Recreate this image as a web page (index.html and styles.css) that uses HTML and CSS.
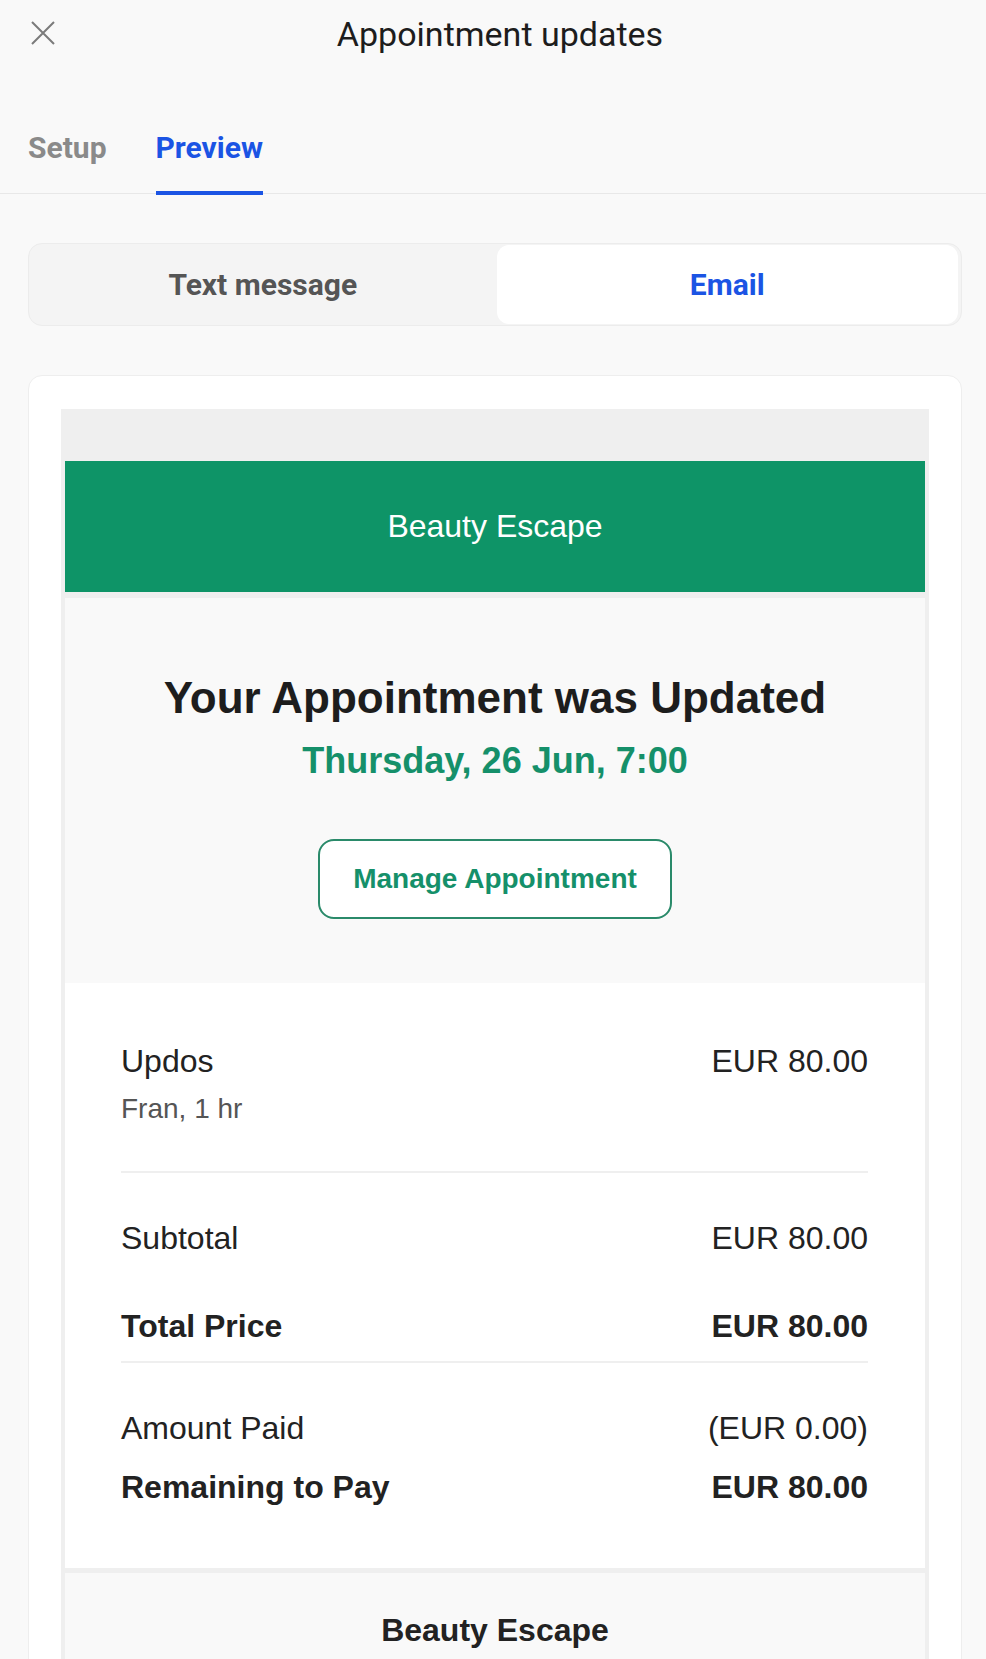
FILE: index.html
```html
<!DOCTYPE html>
<html lang="en">
<head>
  <meta charset="UTF-8" />
  <title>Appointment updates</title>
  <link rel="stylesheet" href="styles.css">
</head>
<body>

  <header class="topbar">
    <button class="close" aria-label="Close">
      <svg viewBox="0 0 24 24" width="24" height="24"><path d="M1 1L23 23M23 1L1 23" /></svg>
    </button>
    <h1 class="title">Appointment updates</h1>
    <span></span>
  </header>

  <nav class="tabs">
    <a class="tab">Setup</a>
    <a class="tab active">Preview</a>
  </nav>

  <main class="content">
    <div class="segmented">
      <button class="seg">Text message</button>
      <button class="seg on">Email</button>
    </div>

    <section class="card">
      <div class="email">
        <div class="email-brand">Beauty Escape</div>

        <div class="email-hero">
          <h2 class="hero-title">Your Appointment was Updated</h2>
          <div class="hero-date">Thursday, 26 Jun, 7:00</div>
          <a class="manage-btn">Manage Appointment</a>
        </div>

        <div class="email-body">
          <div class="item">
            <div class="row">
              <span>Updos</span>
              <span>EUR 80.00</span>
            </div>
            <div class="item-meta">Fran, 1 hr</div>
          </div>

          <div class="totals">
            <div class="row">
              <span>Subtotal</span>
              <span>EUR 80.00</span>
            </div>
            <div class="row strong gap">
              <span>Total Price</span>
              <span>EUR 80.00</span>
            </div>
          </div>

          <div class="payments">
            <div class="row">
              <span>Amount Paid</span>
              <span>(EUR 0.00)</span>
            </div>
            <div class="row strong tight">
              <span>Remaining to Pay</span>
              <span>EUR 80.00</span>
            </div>
          </div>
        </div>

        <div class="email-footer">Beauty Escape</div>
      </div>
    </section>
  </main>

</body>
</html>
```

FILE: styles.css
```css
body { margin: 0; background: #f9f9f9; font-family: Roboto, "Liberation Sans", sans-serif; color: #1f1f1f; }

/* header */
.topbar { display: grid; grid-template-columns: 1fr auto 1fr; padding: 14px 17px 0 31px; }
.close { justify-self: start; margin-top: 7px; padding: 0; border: none; background: none; width: 24px; height: 24px; }
.close svg { display: block; fill: none; stroke: #7b7b7b; stroke-width: 2; }
.title { margin: 0; font-size: 34px; font-weight: 400; line-height: 40px; color: #1d1d1d; }

.tabs { display: flex; gap: 49px; padding: 76px 0 0 28px; border-bottom: 1px solid #e8e8e8; }
.tab { font-size: 30px; font-weight: 700; line-height: 36px; color: #8a8a8a; padding-bottom: 25px; border-bottom: 4px solid transparent; margin-bottom: -2px; }
.tab.active { color: #1b54e4; border-bottom-color: #1b54e4; }

.content { padding: 49px 24px 0 28px; }

/* text / email switch */
.segmented { display: grid; grid-template-columns: 1fr 1fr; gap: 3px; padding: 1px 3px; background: #f4f4f4; border: 1px solid #ececec; border-radius: 14px; }
.seg { font-family: Roboto, sans-serif; font-size: 30px; font-weight: 700; line-height: 36px; padding: 21.5px 0; border: none; background: none; color: #555; border-radius: 12px; }
.seg.on { background: #fff; color: #1b54e4; }

.card { margin-top: 49px; background: #fff; border: 1px solid #eeeeee; border-radius: 14px; padding: 33px 32px 0; }

/* email preview */
.email { background: #efefef; padding: 52px 4px 0; font-family: "Liberation Sans", Arial, sans-serif; color: #222; }
.email-brand { background: #0e9467; color: #fff; text-align: center; font-size: 32px; line-height: 37px; padding: 47px 0; }

.email-hero { margin-top: 6px; background: #f9f9f9; text-align: center; padding: 74px 0 64px; }
.hero-title { margin: 0; font-size: 44px; line-height: 52px; font-weight: 700; color: #1d1d1d; }
.hero-date { margin-top: 16px; font-size: 36px; line-height: 42px; font-weight: 700; color: #15906a; }
.manage-btn { display: inline-block; margin-top: 57px; padding: 21px 33px; border: 2px solid #2a8a6a; border-radius: 16px; background: #fff; color: #15906a; font-size: 28px; line-height: 33.6px; font-weight: 700; }

.email-body { background: #fff; padding: 56px 57px 59px 56px; }
.row { display: flex; justify-content: space-between; font-size: 32px; line-height: 44px; }
.row.strong { font-weight: 700; }
.row.gap { margin-top: 44px; }
.row.tight { margin-top: 15px; }
.item { padding-bottom: 43px; border-bottom: 2px solid #efefef; }
.item-meta { margin-top: 7px; font-size: 28px; line-height: 38px; color: #555; }
.totals { padding: 43px 0 13px; border-bottom: 2px solid #efefef; }
.payments { padding-top: 43px; }

.email-footer { margin-top: 5px; background: #f9f9f9; text-align: center; font-size: 32px; line-height: 37px; font-weight: 700; padding: 39px 0 80px; }
```
